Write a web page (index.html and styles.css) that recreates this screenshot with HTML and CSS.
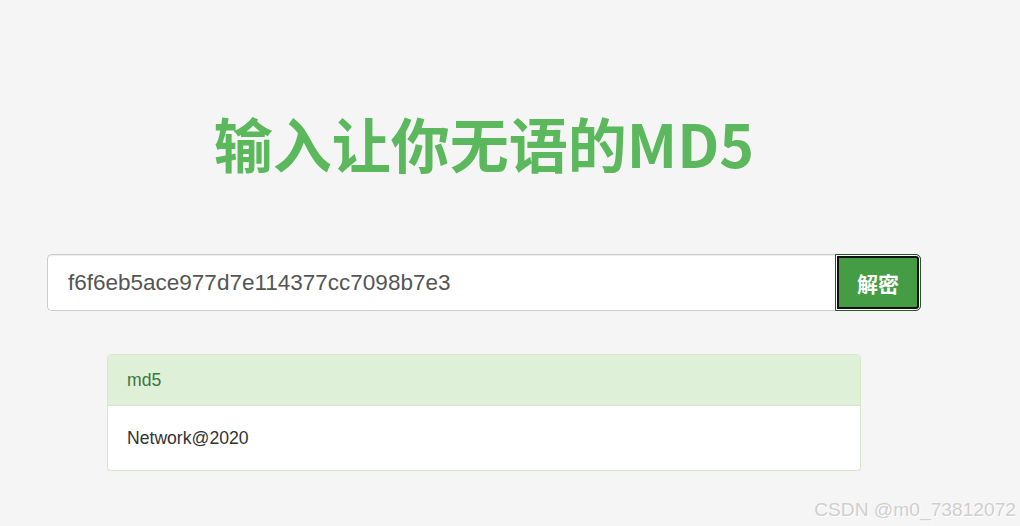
FILE: index.html
```html
<!DOCTYPE html>
<html lang="zh-CN">
<head>
  <meta charset="UTF-8" />
  <meta name="viewport" content="width=device-width, initial-scale=1" />
  <title>MD5 解密</title>
  <link rel="stylesheet" href="styles.css">
</head>
<body>

  <div class="container">
    <h1 class="title">输入让你无语的MD5</h1>

    <form class="input-group" onsubmit="return false">
      <input type="text" class="form-control" value="f6f6eb5ace977d7e114377cc7098b7e3" />
      <button type="submit" class="btn-success">解密</button>
    </form>

    <div class="panel">
      <div class="panel-heading">md5</div>
      <div class="panel-body">Network@2020</div>
    </div>
  </div>

  <div class="watermark">CSDN @m0_73812072</div>

</body>
</html>
```

FILE: styles.css
```css
* {
  box-sizing: border-box;
}
body {
  font-family: "Liberation Sans", Arial, "Noto Sans CJK SC", sans-serif;
  background: #f5f5f5;
  color: #333;
  margin: 0;
  padding: 0;
}
.container {
  width: 874px;
  margin-left: 47px;
  padding-top: 104px;
}
.title {
  margin: 0;
  text-align: center;
  font-family: "Noto Sans CJK SC", sans-serif;
  font-size: 59px;
  font-weight: 700;
  line-height: 78px;
  color: #5cb85c;
}
.input-group {
  display: flex;
  margin-top: 72px;
  height: 57px;
}
.form-control {
  flex: 1;
  min-width: 0;
  height: 100%;
  margin: 0;
  padding: 0 20px;
  font-family: "Liberation Sans", Arial, sans-serif;
  font-size: 22.5px;
  color: #555;
  background: #fff;
  border: 1px solid #ccc;
  border-right: none;
  border-radius: 5px 0 0 5px;
  outline: none;
  box-shadow: inset 0 1px 1px rgba(0,0,0,0.075);
}
.btn-success {
  width: 86px;
  height: 100%;
  margin: 0;
  padding: 0;
  font-family: "Noto Sans CJK SC", sans-serif;
  font-size: 21px;
  font-weight: 700;
  color: #fff;
  background: #449d44;
  border: 1px solid #255625;
  border-radius: 0 5px 5px 0;
  box-shadow: inset 0 0 0 1px #fff, inset 0 0 0 3px #111;
  cursor: pointer;
}
.panel {
  margin: 43px 60px 0;
  background: #fff;
  border: 1px solid #d6e9c6;
  border-radius: 4px;
  overflow: hidden;
  box-shadow: 0 1px 1px rgba(0,0,0,0.05);
}
.panel-heading {
  height: 51px;
  padding: 0 19px;
  display: flex;
  align-items: center;
  font-size: 17.6px;
  color: #3c763d;
  background: #dff0d8;
  border-bottom: 1px solid #d6e9c6;
}
.panel-body {
  height: 64px;
  padding: 0 19px;
  display: flex;
  align-items: center;
  font-size: 17.6px;
  color: #333;
}
.watermark {
  position: absolute;
  right: 4px;
  bottom: 5px;
  font-size: 19.2px;
  color: #cfcfcf;
  text-shadow: 1px 1px 0 #fff;
}
```
